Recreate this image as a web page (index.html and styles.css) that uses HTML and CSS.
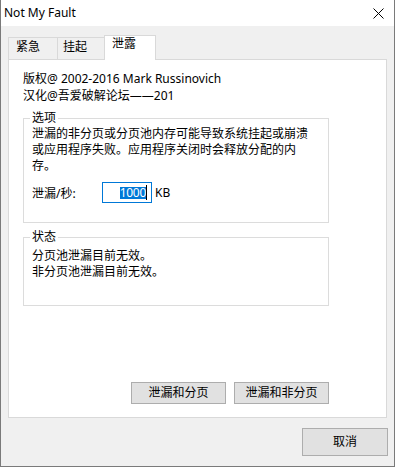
FILE: index.html
```html
<!DOCTYPE html>
<html lang="zh-CN">
<head>
    <meta charset="UTF-8">
    <title>Not My Fault</title>
    <link rel="stylesheet" href="styles.css">
</head>
<body>
    <div class="window">
        <div class="titlebar">
            <span class="title">Not My Fault</span>
            <svg class="close" width="11" height="11" viewBox="0 0 11 11">
                <path d="M0.5 0.5 L10.5 10.5 M10.5 0.5 L0.5 10.5" stroke="#000" stroke-width="1" fill="none"/>
            </svg>
        </div>
        <div class="client">
            <div class="tabs">
                <div class="tab tab-1">紧急</div>
                <div class="tab tab-2">挂起</div>
                <div class="tab tab-3 active">泄露</div>
            </div>
            <div class="panel">
                <div class="about">
                    <div>版权@ 2002-2016 Mark Russinovich</div>
                    <div>汉化@吾爱破解论坛——201</div>
                </div>
                <fieldset class="group group-options">
                    <legend>选项</legend>
                    <div class="desc">泄漏的非分页或分页池内存可能导致系统挂起或崩溃<br>或应用程序失败。应用程序关闭时会释放分配的内<br>存。</div>
                    <div class="rate-row">
                        <span class="rate-label">泄漏/秒:</span>
                        <div class="edit"><span class="sel">1000</span><span class="caret"></span></div>
                        <span class="unit">KB</span>
                    </div>
                </fieldset>
                <fieldset class="group group-status">
                    <legend>状态</legend>
                    <div class="status-line">分页池泄漏目前无效。</div>
                    <div class="status-line">非分页池泄漏目前无效。</div>
                </fieldset>
                <div class="actions">
                    <button class="btn">泄漏和分页</button>
                    <button class="btn">泄漏和非分页</button>
                </div>
            </div>
            <div class="footer">
                <button class="btn btn-cancel">取消</button>
            </div>
        </div>
    </div>
</body>
</html>
```

FILE: styles.css
```css
* { box-sizing: border-box; }
body { margin: 0; font-family: "Noto Sans", "Noto Sans CJK SC", sans-serif; font-size: 12px; color: #000; background: #fff; }
.window { width: 395px; height: 467px; border: 1px solid #7a7a7a; border-top: none; display: flex; flex-direction: column; background: #f0f0f0; }
.titlebar { height: 26px; background: #fff; display: flex; align-items: center; justify-content: space-between; padding: 0 10px 1px 3px; }
.title { font-size: 12px; line-height: 14px; }
.close { display: block; margin-top: 1px; }
.client { flex: 1; padding: 9px 7px 0 7px; display: flex; flex-direction: column; }
.tabs { display: flex; align-items: flex-end; height: 24px; position: relative; z-index: 1; }
.tab { height: 22px; border: 1px solid #d9d9d9; border-bottom: none; background: #f0f0f0; line-height: 18px; padding-left: 7px; margin-right: -1px; white-space: nowrap; }
.tab-1 { width: 50px; }
.tab-2 { width: 48px; padding-left: 5px; }
.tab-3 { width: 52px; padding-left: 7px; }
.tab.active { height: 25px; background: #fff; line-height: 16px; margin-bottom: -1px; }
.panel { height: 359px; background: #fff; border: 1px solid #d9d9d9; padding: 10px 14px 13px 14px; display: flex; flex-direction: column; }
.about { line-height: 17px; white-space: nowrap; }
.group { width: 306px; margin: 7px 0 0 0; border: 1px solid #dcdcdc; padding: 1px 8px 19px 8px; min-width: 0; }
.group legend { padding: 0 2px; margin-left: -2px; line-height: 14px; }
.desc { line-height: 16px; white-space: nowrap; }
.rate-row { display: flex; align-items: center; margin-top: 8px; height: 21px; }
.rate-label { width: 70px; }
.edit { width: 50px; height: 21px; border: 1px solid #0078d7; background: #fff; display: flex; align-items: center; justify-content: flex-end; padding-right: 4px; }
.sel { background: #0078d7; color: #fff; line-height: 12px; font-size: 12px; letter-spacing: -0.3px; }
.caret { width: 1px; height: 15px; background: #000; }
.unit { margin-left: 3px; }
.group-status { padding: 4px 8px 25px 8px; }
.status-line { line-height: 16px; }
.actions { margin-top: auto; width: 306px; display: flex; justify-content: flex-end; gap: 8px; }
.btn { font-family: inherit; font-size: 12px; color: #000; background: #e1e1e1; border: 1px solid #adadad; width: 95px; height: 22px; padding: 0; line-height: 18px; }
.footer { display: flex; justify-content: flex-end; padding: 10px 6px 0 0; margin-right: -7px; }
.btn-cancel { width: 86px; height: 28px; }
```
